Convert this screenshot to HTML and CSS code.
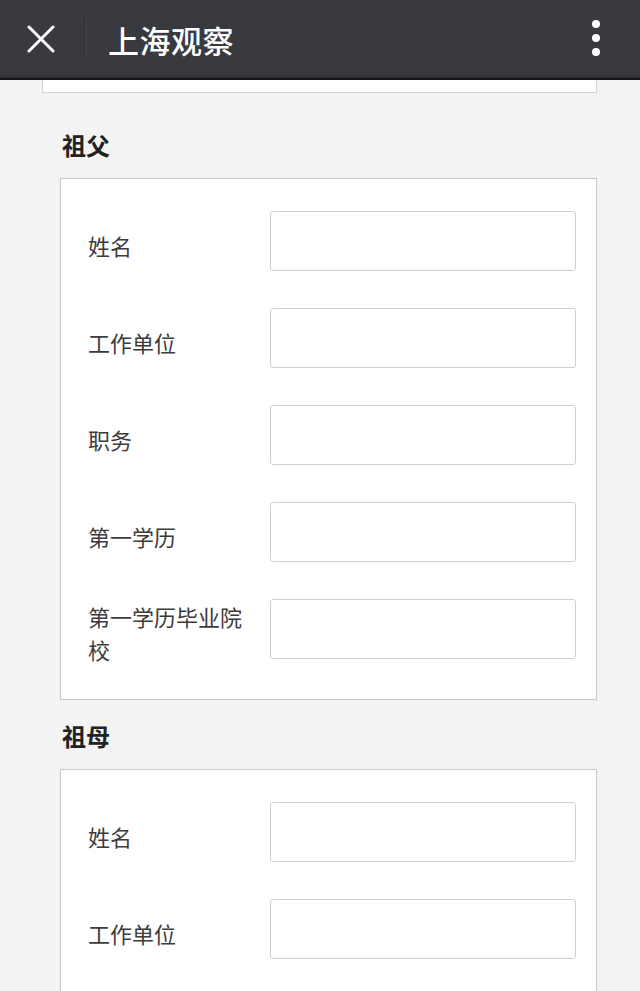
FILE: index.html
```html
<!DOCTYPE html>
<html lang="zh-CN">
<head>
<meta charset="utf-8">
<title>上海观察</title>
<link rel="stylesheet" href="styles.css">
</head>
<body>
<header class="topbar">
  <div class="close">
    <svg width="28" height="28" viewBox="0 0 28 28"><path d="M2 2 L26 26 M26 2 L2 26" stroke="#fff" stroke-width="3" stroke-linecap="round"/></svg>
  </div>
  <div class="divider"></div>
  <h1 class="title">上海观察</h1>
  <div class="more">
    <span class="dot"></span><span class="dot"></span><span class="dot"></span>
  </div>
</header>
<main class="page">
  <div class="prev-card"></div>

  <section class="group first">
    <h2 class="group-title">祖父</h2>
    <div class="card">
      <div class="row"><label class="label">姓名</label><input class="field" type="text"></div>
      <div class="row"><label class="label">工作单位</label><input class="field" type="text"></div>
      <div class="row"><label class="label">职务</label><input class="field" type="text"></div>
      <div class="row"><label class="label">第一学历</label><input class="field" type="text"></div>
      <div class="row"><label class="label">第一学历毕业院校</label><input class="field" type="text"></div>
    </div>
  </section>

  <section class="group">
    <h2 class="group-title">祖母</h2>
    <div class="card">
      <div class="row"><label class="label">姓名</label><input class="field" type="text"></div>
      <div class="row"><label class="label">工作单位</label><input class="field" type="text"></div>
    </div>
  </section>
</main>
</body>
</html>
```

FILE: styles.css
```css
* { box-sizing: border-box; }
html, body {
  margin: 0;
  padding: 0;
}
body {
  background: #f3f3f3;
  font-family: "Noto Sans CJK SC", "Noto Sans", sans-serif;
  width: 640px;
  height: 991px;
  overflow: hidden;
}
.topbar {
  height: 80px;
  background: #393a3f;
  border-bottom: 2px solid #151515;
  box-shadow: inset 0 -3px 0 #303136;
  display: flex;
  align-items: center;
}
.close {
  width: 84px;
  display: flex;
  justify-content: center;
  padding-right: 2px;
}
.close svg { display: block; }
.divider {
  width: 1px;
  height: 40px;
  background: #2d2e32;
  box-shadow: 1px 0 0 #45464b;
}
.title {
  margin: 0 0 0 23px;
  color: #fff;
  font-size: 31px;
  font-weight: 500;
  line-height: 1;
  letter-spacing: 0.5px;
}
.more {
  margin-left: auto;
  width: 86px;
  display: flex;
  flex-direction: column;
  align-items: center;
  gap: 6px;
  padding-right: 2px;
  padding-bottom: 2px;
}
.dot {
  width: 8px;
  height: 8px;
  border-radius: 50%;
  background: #fff;
}
.page {
  padding: 0 43px 0 0;
}
.prev-card {
  margin-left: 42px;
  height: 13px;
  background: #fff;
  border: 1px solid #d4d4d4;
  border-top: none;
}
.group {
  padding-left: 60px;
}
.group.first {
  margin-top: 16px;
}
.group-title {
  margin: 0;
  padding: 24px 0 21px 2px;
  font-size: 24px;
  line-height: 24px;
  font-weight: 700;
  color: #222;
}
.card {
  background: #fff;
  border: 1px solid #c9c9c9;
  box-shadow: 0 0 1px rgba(0,0,0,0.08);
  padding: 32px 20px 40px 27px;
  display: flex;
  flex-direction: column;
  gap: 37px;
}
.row {
  display: flex;
  align-items: center;
  height: 60px;
}
.label {
  width: 182px;
  flex: none;
  padding-right: 16px;
  padding-top: 8px;
  font-size: 22px;
  line-height: 33px;
  color: #3c3c3c;
}
.field {
  width: 306px;
  height: 60px;
  flex: none;
  border: 1px solid #cfcfcf;
  border-radius: 3px;
  background: #fff;
  margin: 0;
  padding: 0 10px;
  font: inherit;
  outline: none;
}
```
